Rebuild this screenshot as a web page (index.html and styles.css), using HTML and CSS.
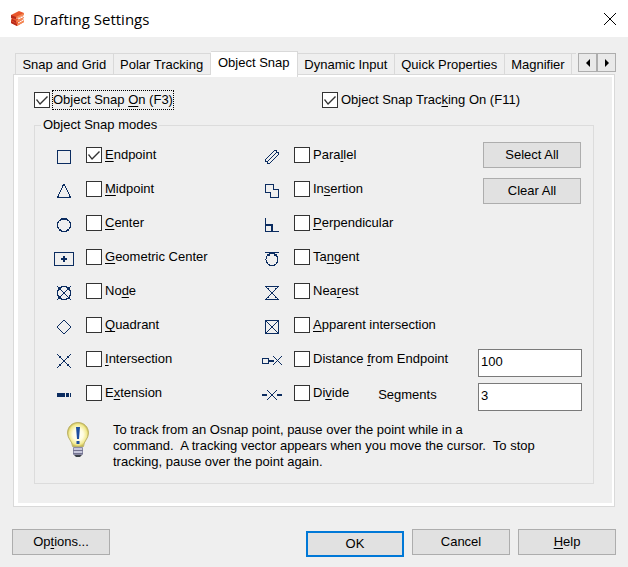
FILE: index.html
```html
<!DOCTYPE html>
<html lang="en">
<head>
<meta charset="utf-8">
<title>Drafting Settings</title>
<link rel="stylesheet" href="styles.css">
</head>
<body>
<main class="dialog">
  <header class="titlebar">
    <svg class="logo" viewBox="0 0 14 15" aria-hidden="true">
      <path fill="#e8562c" d="M0 4 8 0 13 2 13 4 6 7 5 8 12 5 13 6 12 8 5 11 13 8 13 11 6 15 0 12 0 9 1 8 0 7Z"/>
      <path fill="#f58a54" d="M5 6 13 2 13 4 6 7ZM5 10 12 6 12 8 6 11ZM6 13 13 9 13 11 6 15Z"/>
      <path fill="#b52a1c" d="M0 4 5 6 5 8 0 7ZM1 8 5 10 5 12 0 9ZM0 10 6 13 6 15 0 12Z"/>
      <path stroke="#fff" d="M7 8 14 5M7 12 14 8"/>
    </svg>
    <h1 class="title">Drafting Settings</h1>
    <button class="close" type="button" aria-label="Close">
      <svg viewBox="0 0 12 12"><path d="M0 0 12 12M12 0 0 12"/></svg>
    </button>
  </header>

  <div class="content">
    <div class="tabbar">
      <div class="tabs" role="tablist">
        <button class="tab" role="tab" type="button">Snap and Grid</button>
        <button class="tab" role="tab" type="button">Polar Tracking</button>
        <button class="tab active" role="tab" type="button" aria-selected="true">Object Snap</button>
        <button class="tab" role="tab" type="button">Dynamic Input</button>
        <button class="tab" role="tab" type="button">Quick Properties</button>
        <button class="tab" role="tab" type="button">Magnifier</button>
        <span class="tab-rest"></span>
      </div>
      <div class="scroller">
        <button type="button" aria-label="Scroll tabs left"><svg viewBox="0 0 4 8"><path d="M4 0V8L0 4Z"/></svg></button>
        <button type="button" aria-label="Scroll tabs right"><svg viewBox="0 0 4 8"><path d="M0 0V8L4 4Z"/></svg></button>
      </div>
    </div>

    <section class="panel" role="tabpanel">
      <div class="switches">
        <div class="check"><input type="checkbox" id="snap-on" checked><label class="focused" for="snap-on">Object Snap <u>O</u>n (F3)</label></div>
        <div class="check"><input type="checkbox" id="track-on" checked><label for="track-on">Object Snap Trac<u>k</u>ing On (F11)</label></div>
      </div>

      <fieldset class="modes">
        <legend>Object Snap modes</legend>
        <div class="columns">
          <div class="list">
            <div class="mode"><svg class="icon" viewBox="0 0 20 16"><path d="M3.5 1.5H16.5V14.5H3.5Z"/></svg><input type="checkbox" id="endpoint" checked><label for="endpoint"><u>E</u>ndpoint</label></div>
            <div class="mode"><svg class="icon" viewBox="0 0 20 16"><path d="M9.5 1.5H10.5L16.5 14.5H3.5Z"/></svg><input type="checkbox" id="midpoint"><label for="midpoint"><u>M</u>idpoint</label></div>
            <div class="mode"><svg class="icon" viewBox="0 0 20 16"><circle cx="10" cy="8" r="6.5"/><path class="fill" d="M8 1H12V3H8ZM5 3H7V4H5ZM13 3H15V4H13ZM5 12H7V14H5ZM13 12H15V14H13ZM8 14H12V15H8Z"/></svg><input type="checkbox" id="center"><label for="center"><u>C</u>enter</label></div>
            <div class="mode"><svg class="icon" viewBox="0 0 20 16"><path d="M.5 1.5H19.5V14.5H.5Z"/><path class="heavy" d="M7 8H13M10 5V11"/></svg><input type="checkbox" id="geometric"><label for="geometric"><u>G</u>eometric Center</label></div>
            <div class="mode"><svg class="icon" viewBox="0 0 20 16"><circle cx="10" cy="8" r="6.5"/><path d="M3 1 17 15M17 1 3 15"/><path class="fill" d="M4 2H7V4L5 5H4ZM13 2H16V5H15L13 4ZM4 11H5L7 13V14H4ZM15 11H16V14H13V13Z"/></svg><input type="checkbox" id="node"><label for="node">No<u>d</u>e</label></div>
            <div class="mode"><svg class="icon" viewBox="0 0 20 16"><path d="M9.5 1.5H10.5L16.5 7.5V8.5L10.5 14.5H9.5L3.5 8.5V7.5Z"/></svg><input type="checkbox" id="quadrant"><label for="quadrant"><u>Q</u>uadrant</label></div>
            <div class="mode"><svg class="icon" viewBox="0 0 20 16"><path d="M3 1 17 15M17 1 3 15"/><path class="fill" d="M5 3H7V5H5ZM13 3H15V5H13ZM9 7H11V9H9ZM5 11H7V13H5ZM13 11H15V13H13Z"/></svg><input type="checkbox" id="intersection"><label for="intersection"><u>I</u>ntersection</label></div>
            <div class="mode"><svg class="icon" viewBox="0 0 20 16"><path class="fill" d="M3 6H11V10H3ZM12 6H15V10H12ZM16 6H17V10H16Z"/></svg><input type="checkbox" id="extension"><label for="extension">E<u>x</u>tension</label></div>
          </div>

          <div class="list">
            <div class="mode"><svg class="icon" viewBox="0 0 20 16"><path d="M3.5 10.5 12.5 1.5H14.5V3.5L5.5 12.5H3.5ZM5.5 12.5 14.5 3.5H16.5V5.500L7.5 14.5H5.5Z"/></svg><input type="checkbox" id="parallel"><label for="parallel">Para<u>l</u>lel</label></div>
            <div class="mode"><svg class="icon" viewBox="0 0 20 16"><path d="M3.5 1.5H11.5V6.5H16.5V14.5H8.5V9.5H3.5Z"/></svg><input type="checkbox" id="insertion"><label for="insertion">In<u>s</u>ertion</label></div>
            <div class="mode"><svg class="icon" viewBox="0 0 20 16"><path d="M3.5 1V14.5H17"/><path class="heavy" d="M4 8H10V14"/></svg><input type="checkbox" id="perpendicular"><label for="perpendicular"><u>P</u>erpendicular</label></div>
            <div class="mode"><svg class="icon" viewBox="0 0 20 16"><path d="M3 1.5H17"/><circle cx="10" cy="8.500" r="6"/><path class="fill" d="M5 3H8V5H5ZM12 3H15V5H12Z"/></svg><input type="checkbox" id="tangent"><label for="tangent">Ta<u>n</u>gent</label></div>
            <div class="mode"><svg class="icon" viewBox="0 0 20 16"><path d="M3 1.5H17M3 14.5H17M4 2 16 14M16 2 4 14"/><path class="fill" d="M9 7H11V9H9ZM6 3H7V5H6ZM13 3H14V5H13ZM6 11H7V13H6ZM13 11H14V13H13Z"/></svg><input type="checkbox" id="nearest"><label for="nearest">Nea<u>r</u>est</label></div>
            <div class="mode"><svg class="icon" viewBox="0 0 20 16"><path d="M3.5 1.5H16.5V14.5H3.5ZM4 2 16 14M16 2 4 14"/><path class="fill" d="M9 7H11V9H9Z"/></svg><input type="checkbox" id="apparent"><label for="apparent"><u>A</u>pparent intersection</label></div>
            <div class="mode"><svg class="icon" viewBox="0 0 20 16"><path d="M.5 5.5H6.5V10.5H.5ZM11 3 20 12M20 3 11 12"/><path class="heavy" d="M7 8H12"/></svg><input type="checkbox" id="distance"><label for="distance">Distance <u>f</u>rom Endpoint</label></div>
            <div class="mode"><svg class="icon" viewBox="0 0 20 16"><path d="M5 3 15 13M15 3 5 13"/><path class="heavy" d="M0 8H5M15 8H20M9 8H11"/></svg><input type="checkbox" id="divide"><label for="divide">Di<u>v</u>ide</label><label class="segments" for="segment-count">Segments</label></div>
          </div>

          <div class="side">
            <button class="button" type="button">Select All</button>
            <button class="button" type="button">Clear All</button>
            <div class="fields">
              <input class="field" type="text" value="100" aria-label="Distance from Endpoint">
              <input class="field" type="text" id="segment-count" value="3">
            </div>
          </div>
        </div>

        <div class="hint">
          <svg class="bulb" viewBox="0 0 22 36" aria-hidden="true">
            <defs><radialGradient id="glow"><stop offset="0" stop-color="#fff"/><stop offset=".5" stop-color="#fffde0"/><stop offset=".85" stop-color="#f1e98f"/><stop offset="1" stop-color="#c9bd58"/></radialGradient></defs>
            <path fill="url(#glow)" stroke="#bdb36a" d="M11 .5C5 .5.5 5 .5 11 .5 17 5.5 19 5.5 24.5H16.5C16.5 19 21.5 17 21.5 11 21.5 5 17 .5 11 .5Z"/>
            <path fill="#1d4f9f" d="M9 5H13L12 17H10ZM9.500 19H12.500V22H9.500Z"/>
            <path fill="#c7c7dc" stroke="#8b8ba5" d="M6.5 25.5H15.5V32.5H6.5Z"/>
            <path stroke="#73738f" d="M6 28.5H16M6 31.5H16"/>
            <path fill="#3b4148" d="M7 33H15L13 35H9Z"/>
          </svg>
          <p>To track from an Osnap point, pause over the point while in a<br>command.&nbsp; A tracking vector appears when you move the cursor.&nbsp; To stop<br>tracking, pause over the point again.</p>
        </div>
      </fieldset>
    </section>

    <footer class="actions">
      <button class="button options" type="button">Op<u>t</u>ions...</button>
      <button class="button default" type="button">OK</button>
      <button class="button" type="button">Cancel</button>
      <button class="button" type="button"><u>H</u>elp</button>
    </footer>
  </div>
</main>
</body>
</html>
```
FILE: styles.css
```css
* { box-sizing: border-box; }
body {
  margin: 0;
  background: #efefef;
  color: #000;
  font: 13px/16px "Liberation Sans", Arial, sans-serif;
}
button, input { font: inherit; color: inherit; margin: 0; }
button { padding: 0; white-space: nowrap; }
u { text-decoration-thickness: 1px; text-underline-offset: 2px; }
label { white-space: nowrap; }

.titlebar {
  display: flex;
  align-items: center;
  height: 37px;
  padding: 0 12px 0 11px;
  background: #fff;
}
.logo { width: 14px; height: 15px; fill: none; }
.title {
  flex: 1;
  margin: 0 0 0 8px;
  font: 15px/20px "Open Sans", "Noto Sans", sans-serif;
}
.close { display: flex; border: 0; background: none; }
.close svg { width: 12px; height: 12px; fill: none; stroke: #000; }

.content { padding: 14px 12px 11px; }

.tabbar { display: flex; align-items: flex-end; padding-left: 3px; }
.tabs { display: flex; align-items: flex-end; flex: 1; min-width: 0; }
.tab {
  flex: auto;
  height: 21px;
  padding-top: 2px;
  border: solid #d9d9d9;
  border-width: 1px 1px 0 0;
  background: #efefef;
}
.tab:first-child { border-left-width: 1px; }
.tab.active {
  position: relative;
  height: 26px;
  margin-bottom: -3px;
  padding: 0 1px 4px;
  background: #fff;
}
.tab-rest { width: 4px; height: 21px; border-top: 1px solid #d9d9d9; }
.scroller { display: flex; margin: 0 0 2px 2px; }
.scroller button {
  display: flex;
  align-items: center;
  justify-content: center;
  width: 19px;
  height: 19px;
  border: 1px solid #adadad;
  background: #e9e9e9;
}
.scroller svg { width: 4px; height: 8px; }

.panel {
  margin: 0 1px;
  padding: 15px 18px 22px 16px;
  border: 1px solid #d9d9d9;
  box-shadow: inset 4px 2px #fff, inset -2px -3px #fff;
}

.check, .mode { display: flex; align-items: center; }
input[type="checkbox"] {
  appearance: none;
  flex: none;
  width: 16px;
  height: 16px;
  border: 1px solid #333;
  background: #fff;
}
input[type="checkbox"]:checked::after {
  content: "";
  display: block;
  height: 14px;
  background: #333;
  clip-path: polygon(1px 7px, 2px 6px, 5px 10px, 12px 3px, 13px 4px, 5px 12px);
}

.switches {
  display: grid;
  grid-template-columns: 288px 1fr;
  padding-left: 4px;
}
.switches label { margin-left: 2px; padding: 1px 0; border: 1px solid transparent; }
.switches label.focused { border: 1px dotted #000; }

.modes {
  min-width: 0;
  margin: 7px 2px 0 4px;
  padding: 5px 11px 13px 19px;
  border: 1px solid #dcdcdc;
}
.modes legend { margin-left: -13px; padding: 0 2px; }
.columns { display: grid; grid-template-columns: 208px 1fr 104px; }
.list { display: grid; grid-auto-rows: 34px; align-content: start; }
.icon {
  flex: none;
  width: 20px;
  height: 16px;
  margin: 4px 12px 0 0;
  fill: none;
  stroke: #0b2c60;
  shape-rendering: crispEdges;
}
.icon .heavy { stroke-width: 2px; }
.icon .fill { fill: #0b2c60; stroke: none; }
.mode label { margin-left: 3px; }
.mode .segments { margin: 4px 0 0 29px; }

.side { display: flex; flex-direction: column; gap: 10px; padding-top: 4px; }
.side .button { margin: 0 1px 0 5px; }
.button {
  width: 98px;
  height: 26px;
  border: 1px solid #adadad;
  background: #e1e1e1;
}
.fields { display: grid; gap: 6px; margin-top: 135px; }
.field {
  width: 100%;
  height: 28px;
  padding: 0 2px 4px;
  border: 1px solid #7a7a7a;
  background: #fff;
}

.hint { display: flex; gap: 24px; padding: 11px 0 0 13px; }
.bulb { flex: none; width: 22px; height: 36px; fill: none; }
.hint p { margin: 0; white-space: nowrap; }

.actions { display: flex; gap: 8px; margin-top: 22px; }
.options { margin-right: auto; }
.default { margin-top: 2px; border: 2px solid #0078d7; }
```
